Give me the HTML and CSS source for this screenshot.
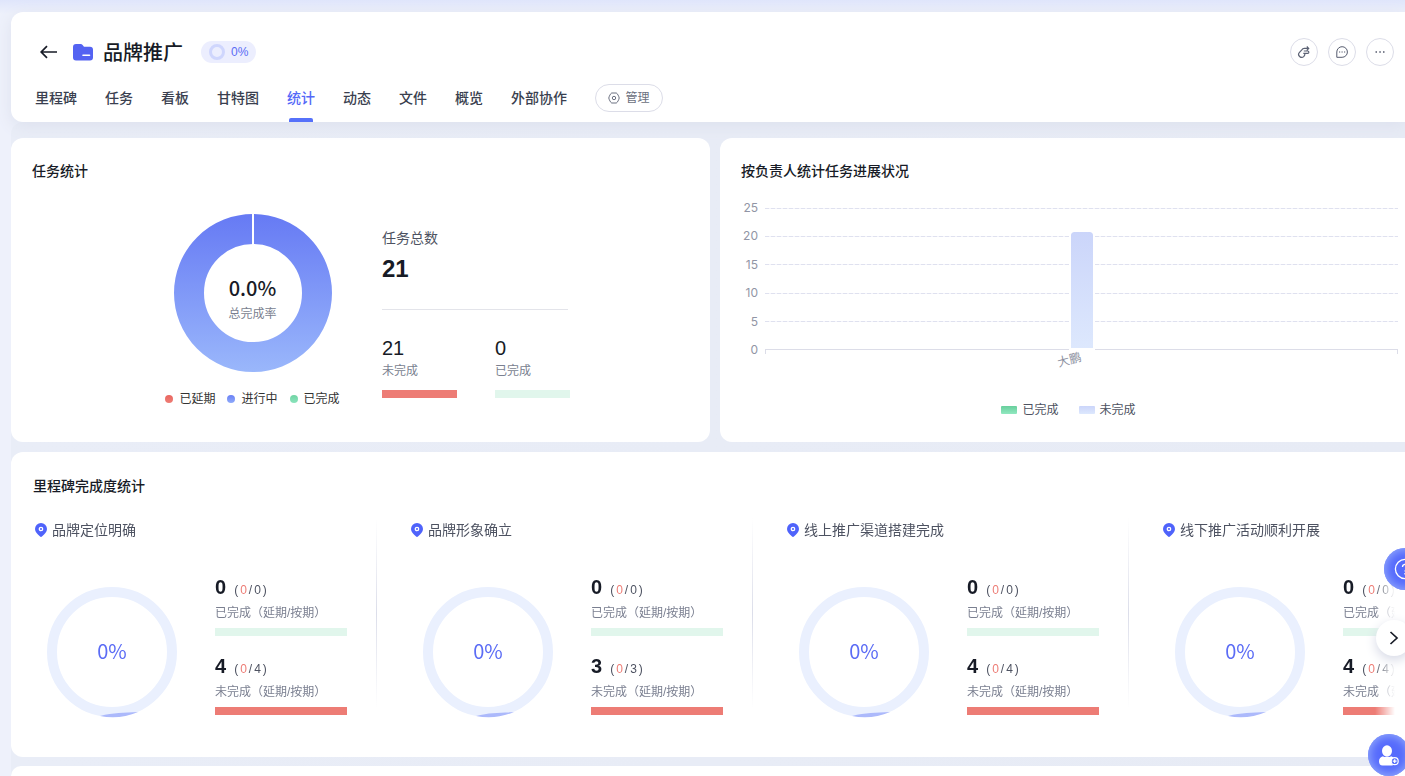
FILE: index.html
```html
<!DOCTYPE html>
<html lang="zh-CN">
<head>
<meta charset="utf-8">
<meta name="viewport" content="width=device-width, initial-scale=1">
<title>品牌推广</title>
<link rel="stylesheet" href="styles.css">
</head>
<body>
<svg class="defs" aria-hidden="true">
  <defs>
    <linearGradient id="donut" x1="0" y1="0" x2="0" y2="158" gradientUnits="userSpaceOnUse"><stop offset="0" stop-color="#667af4"/><stop offset="1" stop-color="#9ab7fb"/></linearGradient>
    <symbol id="pin" viewBox="0 0 12 14"><path fill="#4f63fb" d="M6 0a6 6 0 0 1 6 6c0 3-2.200 4.900-4.800 7.300a1.700 1.700 0 0 1-2.400 0C2.200 10.900 0 9 0 6a6 6 0 0 1 6-6z"/><circle cx="6" cy="6" r="1.700" fill="none" stroke="#fff" stroke-width="1.300"/></symbol>
    <symbol id="ring" viewBox="0 0 130 131"><circle cx="65" cy="65" r="60" fill="none" stroke="#eaf0fe" stroke-width="10"/><path fill="#acb9fb" d="M53 129C67 125.500 76 126 91 125A65 65 0 0 1 53 129z"/></symbol>
  </defs>
</svg>
<header class="header card">
  <div class="headline">
    <button class="back" aria-label="返回"><svg width="18" height="14" viewBox="0 0 18 14"><path d="M17 7H1.500M7 1.200 1.200 7 7 12.800" fill="none" stroke="#171b26" stroke-width="1.700"/></svg></button>
    <svg class="folder" width="20" height="17" viewBox="0 0 20 17"><path fill="#5463f2" d="M3 0h4.600c.900 0 1.500.300 2 1L11 2.700h6a3 3 0 0 1 3 3V13.500a3 3 0 0 1-3 3H3a3 3 0 0 1-3-3V3a3 3 0 0 1 3-3z"/><path d="M10 11.200h6.500" stroke="#fff" stroke-width="1.600" stroke-linecap="round"/></svg>
    <h1>品牌推广</h1>
    <span class="progress"><i></i>0%</span>
    <div class="actions">
      <button aria-label="指派"><svg width="14" height="14" viewBox="0 0 14 14" fill="none" stroke="#5c6274" stroke-width="1.200"><path d="M5.300 4.300 2.500 7.300a3 3 0 0 0 .100 4.200 3.100 3.100 0 0 0 4.300-.100c.800-.900 1.100-1.800.900-3H6.300M5 4.700C5.400 3.700 6.300 3.400 7.300 3.400h4.300M9.800 1.500l1.900 1.900-1.900 1.900M6.800 6h3.900a1 1 0 0 1 0 2.300H8"/></svg></button>
      <button aria-label="讨论"><svg width="14" height="14" viewBox="0 0 14 14" fill="none" stroke="#555b6e"><path d="M1.800 12.300V7a5.300 5.300 0 1 1 5.300 5.300z"/><path d="M4 7h1.200M6.500 7h1.200M9 7h1.200" stroke-width="1.200"/></svg></button>
      <button aria-label="更多"><svg width="12" height="12" viewBox="0 0 12 12"><path d="M1.500 6H3M5.300 6h1.500M9 6h1.500" stroke="#555b6e" stroke-width="1.500"/></svg></button>
    </div>
  </div>
  <nav class="tabs">
    <a href="#">里程碑</a><a href="#">任务</a><a href="#">看板</a><a href="#">甘特图</a><a href="#" class="active" aria-current="page">统计</a><a href="#">动态</a><a href="#">文件</a><a href="#">概览</a><a href="#">外部协作</a>
    <button class="manage"><svg width="12" height="12" viewBox="0 0 12 12" fill="none" stroke="#6b7080"><path d="M3.700 1h4.600c.900 0 2.900 3.900 2.900 5S9.200 11 8.300 11H3.700C2.800 11 .800 7.100.800 6S2.800 1 3.700 1z"/><circle cx="6" cy="6" r="1.700"/></svg>管理</button>
  </nav>
</header>
<main class="content">
  <div class="overview">
    <section class="card panel">
      <h2>任务统计</h2>
      <div class="tasks">
        <div class="rate">
          <div class="donut">
            <svg width="158" height="158" viewBox="0 0 158 158"><circle cx="79" cy="79" r="64" fill="none" stroke="url(#donut)" stroke-width="30"/><path d="M79 0v31" stroke="#fff" stroke-width="2"/></svg>
            <div class="donut-label"><strong>0.0%</strong><span>总完成率</span></div>
          </div>
          <ul class="legend">
            <li><i class="dot red"></i>已延期</li><li><i class="dot blue"></i>进行中</li><li><i class="dot green"></i>已完成</li>
          </ul>
        </div>
        <div class="totals">
          <div class="total"><span>任务总数</span><strong>21</strong></div>
          <div class="split">
            <div><b>21</b><span>未完成</span><i class="bar todo"></i></div>
            <div><b>0</b><span>已完成</span><i class="bar done"></i></div>
          </div>
        </div>
      </div>
    </section>
    <section class="card panel">
      <h2>按负责人统计任务进展状况</h2>
      <div class="chart">
        <div class="axis"><span>25</span><span>20</span><span>15</span><span>10</span><span>5</span><span>0</span></div>
        <div class="plot">
          <div class="lines"><i></i><i></i><i></i><i></i><i></i></div>
          <div class="column"></div>
        </div>
        <div class="person"><span>大鹏</span></div>
      </div>
      <ul class="keys"><li><i class="key green"></i>已完成</li><li><i class="key pale"></i>未完成</li></ul>
    </section>
  </div>
  <section class="card milestones">
    <h2>里程碑完成度统计</h2>
    <div class="track">
      <article class="milestone">
        <h3><svg width="12" height="14"><use href="#pin"/></svg>品牌定位明确</h3>
        <div class="detail">
          <div class="ring"><svg width="130" height="131"><use href="#ring"/></svg><span>0%</span></div>
          <div class="counts">
            <div class="count"><p><b>0</b><span>(</span><em>0</em><span>/</span><span>0</span><span>)</span></p><small>已完成（延期/按期）</small><i class="bar done"></i></div>
            <div class="count"><p><b>4</b><span>(</span><em>0</em><span>/</span><span>4</span><span>)</span></p><small>未完成（延期/按期）</small><i class="bar todo"></i></div>
          </div>
        </div>
      </article>
      <article class="milestone">
        <h3><svg width="12" height="14"><use href="#pin"/></svg>品牌形象确立</h3>
        <div class="detail">
          <div class="ring"><svg width="130" height="131"><use href="#ring"/></svg><span>0%</span></div>
          <div class="counts">
            <div class="count"><p><b>0</b><span>(</span><em>0</em><span>/</span><span>0</span><span>)</span></p><small>已完成（延期/按期）</small><i class="bar done"></i></div>
            <div class="count"><p><b>3</b><span>(</span><em>0</em><span>/</span><span>3</span><span>)</span></p><small>未完成（延期/按期）</small><i class="bar todo"></i></div>
          </div>
        </div>
      </article>
      <article class="milestone">
        <h3><svg width="12" height="14"><use href="#pin"/></svg>线上推广渠道搭建完成</h3>
        <div class="detail">
          <div class="ring"><svg width="130" height="131"><use href="#ring"/></svg><span>0%</span></div>
          <div class="counts">
            <div class="count"><p><b>0</b><span>(</span><em>0</em><span>/</span><span>0</span><span>)</span></p><small>已完成（延期/按期）</small><i class="bar done"></i></div>
            <div class="count"><p><b>4</b><span>(</span><em>0</em><span>/</span><span>4</span><span>)</span></p><small>未完成（延期/按期）</small><i class="bar todo"></i></div>
          </div>
        </div>
      </article>
      <article class="milestone">
        <h3><svg width="12" height="14"><use href="#pin"/></svg>线下推广活动顺利开展</h3>
        <div class="detail">
          <div class="ring"><svg width="130" height="131"><use href="#ring"/></svg><span>0%</span></div>
          <div class="counts">
            <div class="count"><p><b>0</b><span>(</span><em>0</em><span>/</span><span>0</span><span>)</span></p><small>已完成（延期/按期）</small><i class="bar done"></i></div>
            <div class="count"><p><b>4</b><span>(</span><em>0</em><span>/</span><span>4</span><span>)</span></p><small>未完成（延期/按期）</small><i class="bar todo"></i></div>
          </div>
        </div>
      </article>
    </div>
    <button class="next" aria-label="下一页"><svg width="10" height="14" viewBox="0 0 10 14"><path d="M1.500 1 8 7l-6.500 6" fill="none" stroke="#171b26" stroke-width="1.700"/></svg></button>
  </section>
  <section class="card rest"></section>
</main>
<button class="float help" aria-label="帮助"><svg width="22" height="22" viewBox="0 0 22 22" fill="none" stroke="#fff" stroke-width="1.300"><circle cx="11" cy="11" r="9.600"/><path d="M8.500 9a2.700 2.700 0 1 1 4 2.300c-1 .600-1.500 1-1.500 2.200M11 15v1.500"/></svg></button>
<button class="float invite" aria-label="邀请成员"><svg width="20" height="21" viewBox="0 0 20 21"><ellipse cx="8" cy="6" rx="5" ry="5.700" fill="#fff"/><path fill="#fff" d="M4 11.200c1.200 1.200 6.800 1.200 8 0 2.500.500 4 2.500 4 5 0 2.800-1.300 4.300-3.500 4.300h-9C1.300 20.500 0 19 0 16.200c0-2.500 1.500-4.500 4-5z"/><circle cx="15.700" cy="16.200" r="3.500" fill="#5870fb" stroke="#fff" stroke-width="1.200"/><path d="M13.800 16.200h3.800M15.700 14.300v3.800" stroke="#fff" stroke-width="1.200"/></svg></button>
</body>
</html>
```
FILE: styles.css
```css
* { box-sizing: border-box; }
body {
  margin: 0;
  min-height: 100vh;
  display: flex;
  flex-direction: column;
  padding: 12px 0 0 11px;
  background: linear-gradient(#dfe5fb, #eef1fb 14px, #eef1fb);
  font: 12px/18px "Liberation Sans", "Noto Sans CJK SC", sans-serif;
  color: #171b26;
  overflow-x: hidden;
}
.defs { position: absolute; width: 0; height: 0; }
h1, h2, h3, p, ul { margin: 0; padding: 0; }
ul { list-style: none; }
i, em { font-style: normal; }
a { color: inherit; text-decoration: none; }
button { font: inherit; padding: 0; border: 0; background: none; display: flex; align-items: center; justify-content: center; }
svg { display: block; flex: none; }
.card { background: #fff; border-radius: 12px 0 0 12px; }

.header { position: relative; padding: 24px 11px 0 24px; box-shadow: 0 4px 16px #dde1ee; }
.headline { display: flex; align-items: center; height: 32px; }
.back { width: 28px; height: 28px; }
.folder { margin-left: 10px; }
h1 { margin-left: 10px; font-size: 20px; line-height: 32px; font-weight: 500; font-family: "Noto Sans CJK SC", sans-serif; }
.progress { display: flex; align-items: center; gap: 6px; height: 22px; margin-left: 18px; padding: 0 8px; border-radius: 11px; background: #eceefe; color: #5b6cf5; }
.progress i { width: 16px; height: 16px; border: 3px solid #cfd6fd; border-radius: 50%; }
.actions { display: flex; gap: 10px; margin-left: auto; }
.actions button { width: 28px; height: 28px; border: 1px solid #dcdde8; border-radius: 50%; }
.tabs { display: flex; align-items: center; gap: 28px; margin-top: 12px; height: 42px; font-size: 14px; font-weight: 500; color: #3a3f4f; white-space: nowrap; }
.tabs a { display: flex; flex-direction: column; align-items: center; height: 42px; line-height: 36px; }
.tabs .active { color: #5468f8; }
.active::after { content: ""; width: 24px; height: 4px; margin-top: 2px; border-radius: 2px 2px 0 0; background: #5671fa; }
.manage { gap: 5px; width: 68px; height: 28px; margin-bottom: 6px; border: 1px solid #dcdde8; border-radius: 14px; font-size: 12px; font-weight: 400; color: #6b7080; }

.content { flex: 1; display: flex; flex-direction: column; padding-top: 16px; background: linear-gradient(90deg, #e9edf7, #e7ebf5); border-radius: 12px 0 0 0; }
.overview { display: grid; grid-template-columns: 699fr 685fr; gap: 10px; }
.overview .card:first-child { border-radius: 12px; }
.panel { min-height: 304px; padding: 22px 7px 0 21px; }
h2 { font-size: 14px; line-height: 22px; font-weight: 500; }
.tasks { display: flex; justify-content: center; gap: 42px; padding: 32px 0 0 2px; }
.rate { width: 175px; display: flex; flex-direction: column; align-items: center; }
.donut, .ring { display: grid; place-items: center; }
.donut > *, .ring > * { grid-area: 1 / 1; }
.donut-label { display: flex; flex-direction: column; align-items: center; padding-top: 8px; color: #7a7f90; }
.donut-label strong { margin-bottom: 1px; font: 500 20px/32px "Noto Sans CJK SC", sans-serif; color: #171b26; }
.legend { display: flex; gap: 12px; margin-top: 18px; white-space: nowrap; color: #333; }
.legend li { display: flex; align-items: center; gap: 6px; }
.dot { width: 8px; height: 8px; border-radius: 50%; }
.dot.red { background: linear-gradient(#e96660, #ee7d75); }
.dot.blue { background: linear-gradient(#6a80f5, #8fabfa); }
.dot.green { background: linear-gradient(#6fd3a3, #8ce4bd); }
.totals { width: 190px; padding-top: 13px; }
.total { display: flex; flex-direction: column; width: 186px; padding-bottom: 23px; border-bottom: 1px solid #e3e4ea; font-size: 14px; line-height: 22px; color: #4d5261; }
.total strong { margin-top: 3px; font-size: 24px; line-height: 34px; color: #171b26; }
.split { display: flex; gap: 38px; padding-top: 25px; }
.split div { display: flex; flex-direction: column; width: 75px; color: #7a7f90; }
.split b { margin-bottom: 1px; font-size: 20px; line-height: 26px; font-weight: 400; color: #171b26; }
.bar { height: 8px; margin-top: 10px; }
.todo { background: #ed7c75; }
.done { background: #e1f6ec; }

.chart { display: grid; grid-template-columns: 17px 1fr; column-gap: 7px; margin-top: 20px; }
.axis { display: flex; flex-direction: column; justify-content: space-between; height: 160px; margin: -3px 0; text-align: right; font-family: Inter, sans-serif; color: #9195a5; }
.axis span { line-height: 18px; }
.plot { display: grid; height: 147px; align-self: start; margin-top: 6px; background: linear-gradient(#dcdde8, #dcdde8) 0 141px / 1px 5px no-repeat, linear-gradient(#dcdde8, #dcdde8) 100% 141px / 1px 5px no-repeat; }
.plot > * { grid-area: 1 / 1; }
.lines { display: flex; flex-direction: column; height: 142px; border-bottom: 1px solid #dcdde8; }
.lines i { flex: 1; background: repeating-linear-gradient(90deg, #dfe1ef 0 4px, #f4f4fb 4px 6px) top / 100% 1px no-repeat; }
.column { justify-self: center; width: 26px; height: 120px; margin-top: 22px; border: 2px solid #fff; border-radius: 5px 5px 0 0; background: linear-gradient(#cbd5fa, #dde8fd) padding-box; }
.person { grid-column: 2; display: flex; justify-content: center; height: 10px; line-height: 2px; color: #8c90a0; }
.person span { padding-right: 22px; transform: rotate(-15deg); }
.keys { display: flex; justify-content: center; gap: 20px; margin-top: 35px; padding-right: 2px; color: #4d5261; }
.keys li { display: flex; align-items: center; gap: 5px; }
.key { width: 16px; height: 8px; border-radius: 1px; }
.key.green { background: linear-gradient(#68cf9c, #91e8c0); }
.key.pale { background: linear-gradient(#cbd5fa, #dde8fd); }

.milestones { position: relative; margin-top: 10px; padding: 23px 10px 39px 22px; }
.track { display: flex; gap: 32px; margin-top: 21px; overflow: hidden; mask-image: linear-gradient(90deg, #000 calc(100% - 20px), transparent); }
.milestone { flex: none; width: 344px; padding: 1px 0 0 2px; background: linear-gradient(#fff, #dcdeea 50%, #fff) 100% 0 / 1px 190px no-repeat; }
h3 { display: flex; align-items: center; gap: 5px; font-size: 14px; line-height: 22px; font-weight: 400; color: #4d5261; white-space: nowrap; }
.detail { display: flex; gap: 38px; padding: 33px 0 0 12px; }
.ring { align-self: start; margin-top: 13px; font: 20px/30px "Noto Sans CJK SC", sans-serif; color: #5b6cf5; }
.ring span { padding-bottom: 4px; }
.counts { display: flex; flex-direction: column; gap: 17px; width: 132px; }
.count { display: flex; flex-direction: column; white-space: nowrap; }
.count p { display: flex; align-items: baseline; gap: 2px; line-height: 26px; color: #4d5261; }
.count b { margin-right: 6px; font-size: 20px; color: #171b26; }
.count em { color: #ed7c75; }
.count small { margin-top: 1px; font-size: 12px; line-height: 18px; color: #7a7f90; }
.count .bar { margin-top: 6px; }
.next { position: absolute; right: -7px; top: 168px; width: 36px; height: 36px; border-radius: 50%; background: #fff; box-shadow: 0 4px 12px #d5d8e5; }
.rest { flex: 1; min-height: 10px; margin-top: 9px; border-radius: 12px 0 0 0; }
.float { position: fixed; width: 42px; height: 42px; border-radius: 50%; background: #566bfc; box-shadow: inset 0 0 8px 2px #8fa6fb; }
.help { right: -21px; top: 548px; }
.invite { right: -5px; top: 734px; }
```
